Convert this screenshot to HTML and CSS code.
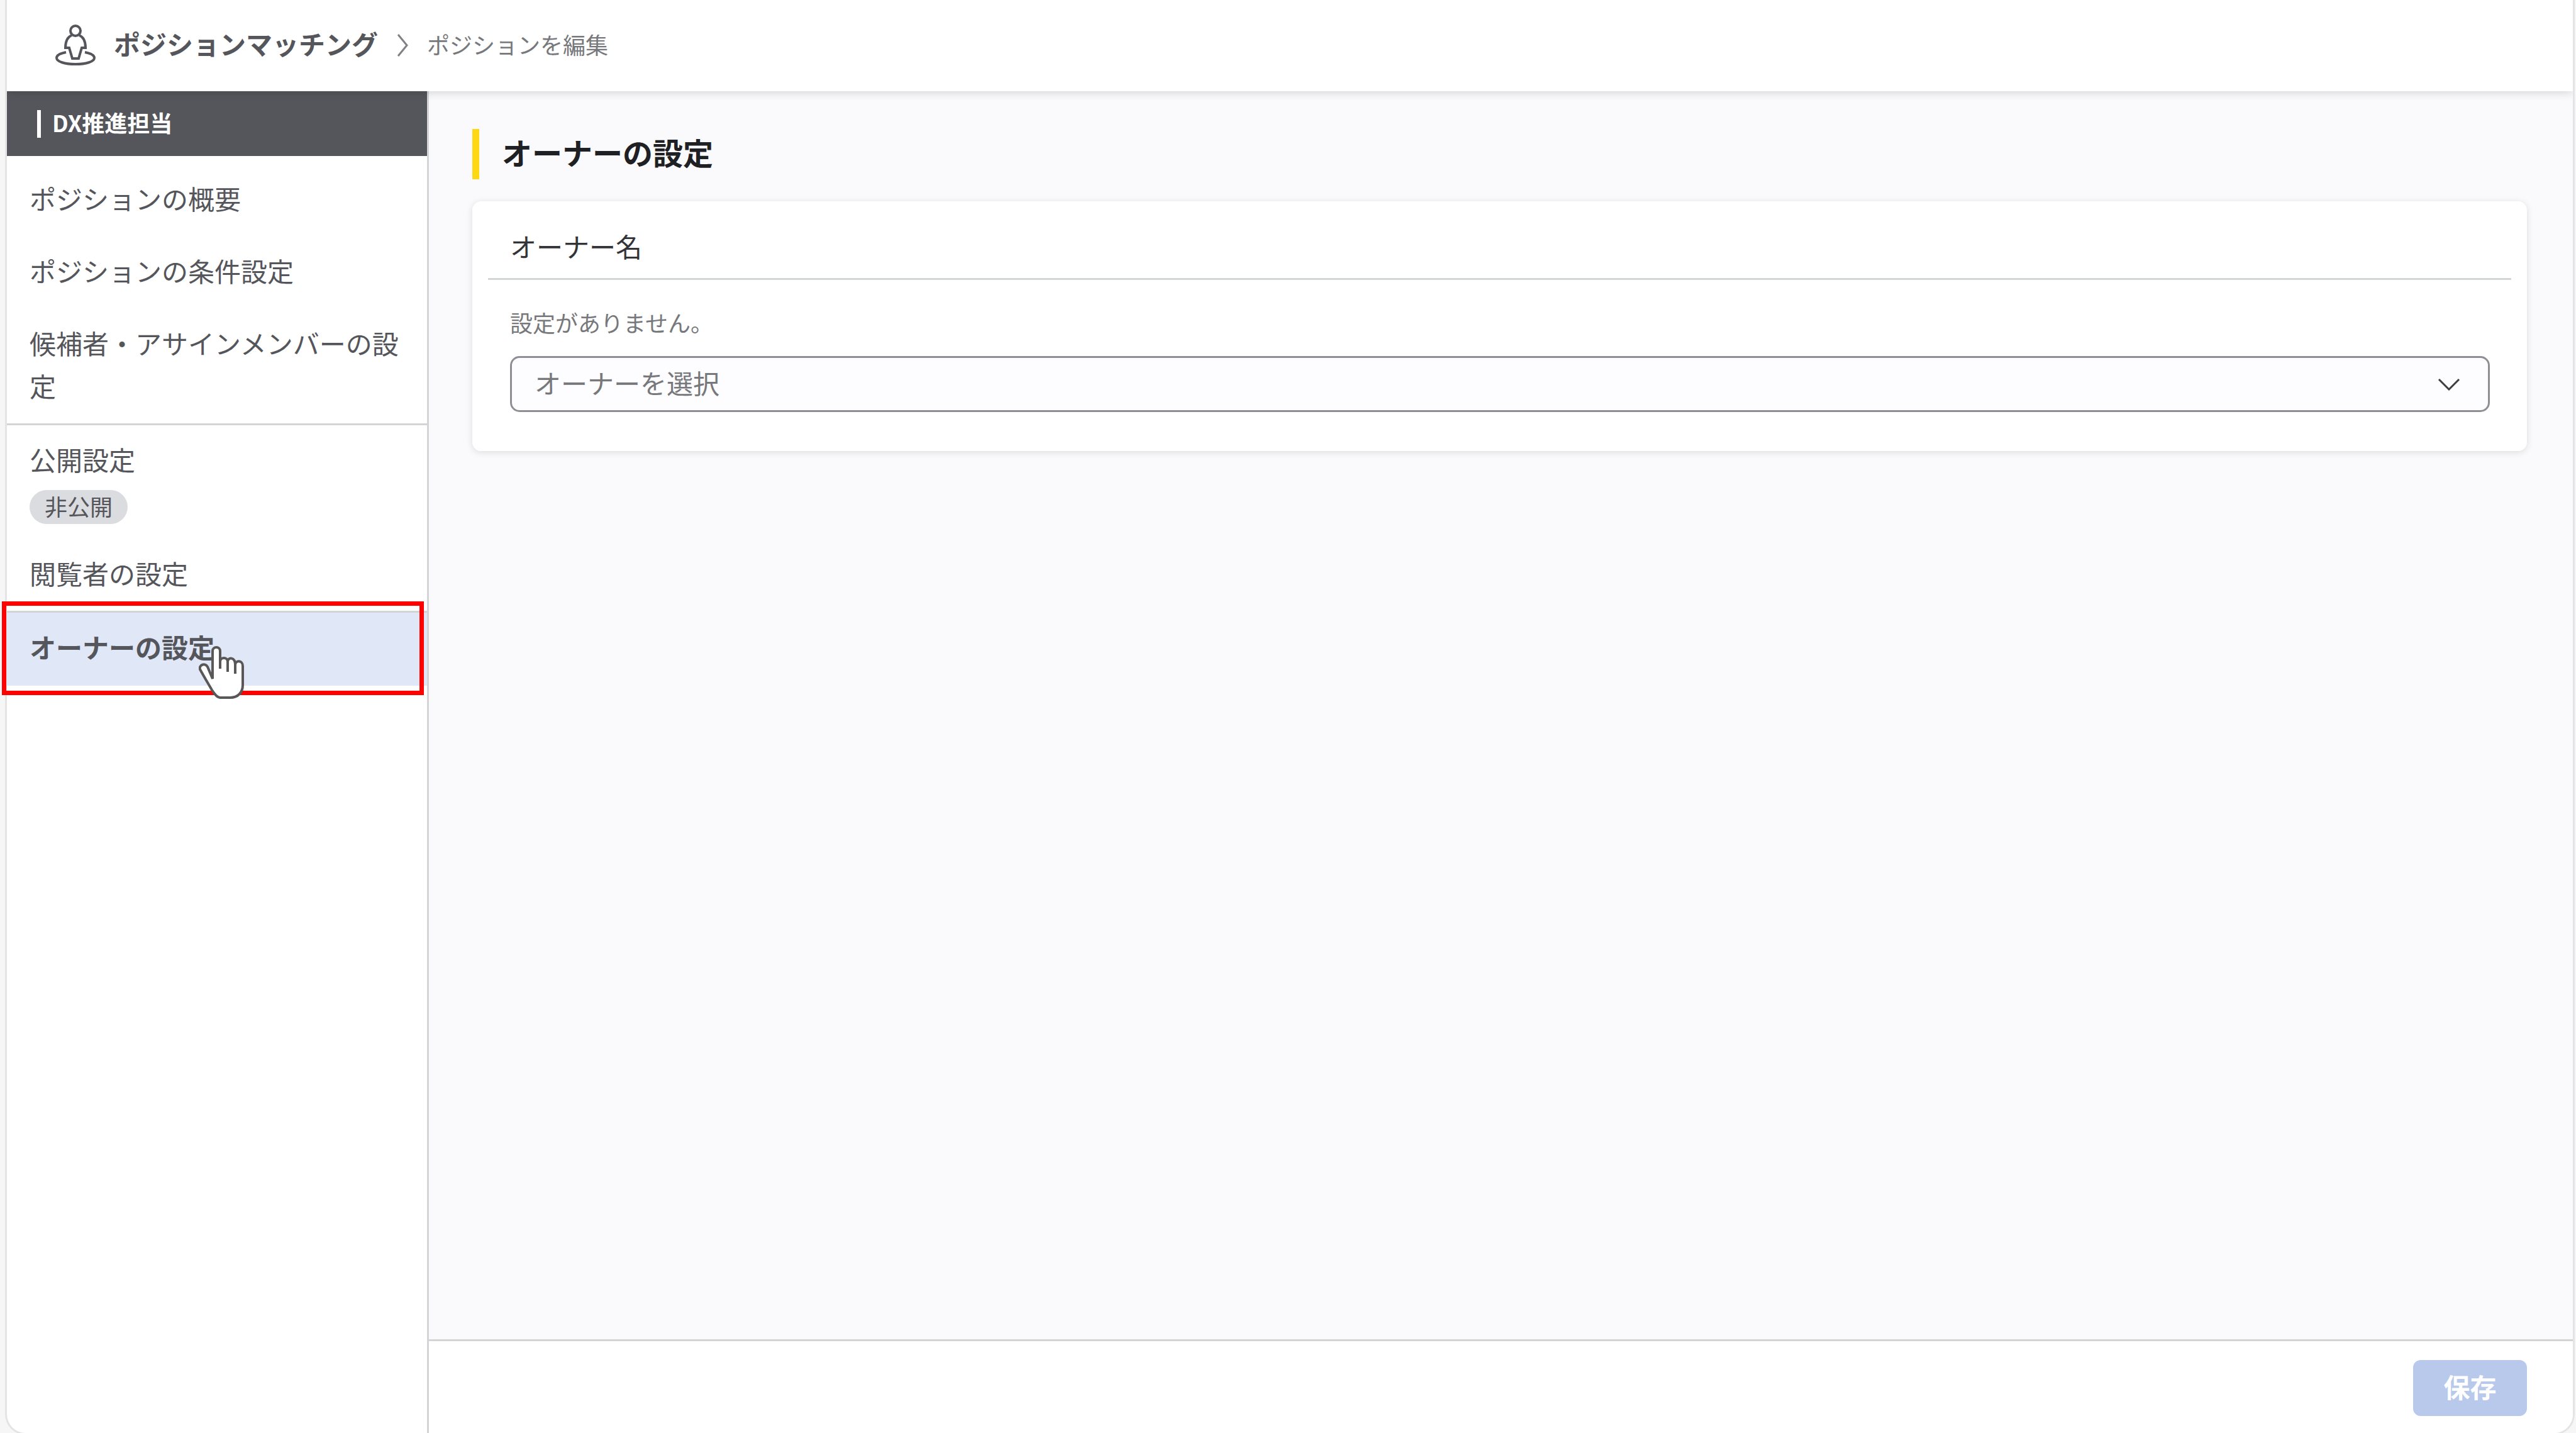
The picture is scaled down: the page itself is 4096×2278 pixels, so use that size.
FILE: index.html
```html
<!DOCTYPE html>
<html lang="ja">
<head>
<meta charset="utf-8">
<title>ポジションを編集</title>
<link rel="stylesheet" href="styles.css">
</head>
<body>
<div class="app">
  <header class="header">
    <svg class="header-icon" viewBox="0 0 64 66" aria-hidden="true">
      <ellipse cx="32" cy="10" rx="8" ry="8"/>
      <path d="M26 17C19 20 16 27 16 37H22L27 54H37L42 37H48C48 27 45 20 38 17"/>
      <path d="M17 44C7 46 2 49 2 53C2 59 15 63 32 63C49 63 62 59 62 53C62 49 57 46 47 44"/>
    </svg>
    <nav class="breadcrumb" aria-label="パンくず">
      <a class="breadcrumb-root" href="#">ポジションマッチング</a>
      <svg class="breadcrumb-sep" viewBox="0 0 18 36" aria-hidden="true"><path d="M2 1L16 18L2 35"/></svg>
      <span class="breadcrumb-current">ポジションを編集</span>
    </nav>
  </header>
  <div class="body">
    <aside class="sidebar">
      <h2 class="sidebar-title"><span class="sidebar-name">DX推進担当</span></h2>
      <nav class="menu">
        <div class="menu-group">
          <a class="menu-item" href="#">ポジションの概要</a>
          <a class="menu-item" href="#">ポジションの条件設定</a>
          <a class="menu-item" href="#">候補者・アサインメンバーの設定</a>
        </div>
        <div class="menu-group">
          <a class="menu-item" href="#">公開設定<span class="badge">非公開</span></a>
          <a class="menu-item" href="#">閲覧者の設定</a>
        </div>
        <div class="menu-group">
          <a class="menu-item active" href="#" aria-current="page">オーナーの設定
            <span class="highlight"></span>
            <svg class="pointer" viewBox="0 0 72 84" aria-hidden="true">
              <path d="M22 52V8C22 0 34 0 34 8V25C34 17 46 17 46 25C46 17 58 17 58 30C58 22 70 22 70 32V62C70 74 62 82 50 82H34C29 82 25 76 21 70C14 58 8 48 2 37C0 30 10 26 14 33Z"/>
              <path d="M34 22V36M46 24V41M58 28V44"/>
            </svg>
          </a>
        </div>
      </nav>
    </aside>
    <div class="content">
      <main class="main">
        <h1 class="page-title">オーナーの設定</h1>
        <section class="card">
          <h2 class="card-title"><label for="owner">オーナー名</label></h2>
          <div class="card-body">
            <p class="note">設定がありません。</p>
            <div class="select-wrap">
              <select class="select" id="owner"><option>オーナーを選択</option></select>
              <svg class="select-arrow" viewBox="0 0 36 20" aria-hidden="true"><path d="M2 2L18 18L34 2"/></svg>
            </div>
          </div>
        </section>
      </main>
      <footer class="footer">
        <button class="save" type="button" disabled>保存</button>
      </footer>
    </div>
  </div>
</div>
</body>
</html>
```
FILE: styles.css
```css
* {
  box-sizing: border-box;
}

body {
  margin: 0;
  background: #f6f6f6;
  color: #55565b;
  font-family: "Noto Sans CJK JP", "Noto Sans", sans-serif;
  font-size: 42px;
  line-height: 68px;
}

h1, h2, p {
  margin: 0;
}

a {
  color: inherit;
  text-decoration: none;
}

svg {
  fill: none;
  stroke: #55565b;
  stroke-width: 4;
}

.app {
  display: flex;
  flex-direction: column;
  min-height: 100vh;
  margin: 0 5px 0 11px;
  background: #fff;
  border-radius: 0 0 30px 30px;
  box-shadow: 0 0 0 3px #e4e4e4;
}

/* Header */
.header {
  position: relative;
  z-index: 1;
  display: flex;
  align-items: center;
  gap: 29px;
  height: 145px;
  padding: 0 77px 2px;
  background: #fff;
  box-shadow: 0 2px 14px rgba(0, 0, 0, 0.16);
  clip-path: inset(0 0 -20px 0);
}

.header-icon {
  width: 64px;
  height: 66px;
}

.breadcrumb {
  display: flex;
  align-items: center;
  gap: 30px;
}

.breadcrumb-root {
  padding-bottom: 6px;
  font-weight: 700;
}

.breadcrumb-sep {
  width: 18px;
  height: 36px;
  stroke: #808185;
  stroke-width: 3;
}

.breadcrumb-current {
  padding-bottom: 4px;
  color: #77787c;
  font-size: 36px;
}

/* Sidebar */
.body {
  display: flex;
  flex: 1;
}

.sidebar {
  flex: none;
  width: 671px;
  border-right: 3px solid #d3d4d6;
}

.sidebar-title {
  display: flex;
  align-items: center;
  gap: 18px;
  height: 103px;
  padding: 0 48px;
  background: #55565b;
  color: #fff;
  font-size: 36px;
  font-weight: 700;
}

.sidebar-title::before {
  content: "";
  width: 6px;
  height: 44px;
  background: #fff;
}

.sidebar-name {
  padding-bottom: 6px;
}

.menu {
  padding-top: 13px;
}

.menu-group {
  display: flex;
  flex-direction: column;
  gap: 1px;
}

.menu-group + .menu-group {
  border-top: 3px solid #d3d4d6;
}

.menu-item {
  position: relative;
  padding: 20px 36px 26px;
}

.badge {
  display: block;
  width: fit-content;
  margin: 15px 0 -3px;
  padding: 0 24px 4px;
  border-radius: 27px;
  background: #dadce0;
  font-size: 36px;
  line-height: 50px;
}

.menu-item.active {
  padding-bottom: 28px;
  background: #e0e7f7;
  font-weight: 700;
}

.highlight {
  position: absolute;
  inset: -18px 5px -15px -8px;
  border: 7px solid #f00;
}

.pointer {
  position: absolute;
  top: 53px;
  left: 305px;
  width: 72px;
  height: 84px;
  fill: #fff;
  stroke: #595757;
}

/* Content */
.content {
  display: flex;
  flex: 1;
  flex-direction: column;
  min-width: 0;
}

.main {
  flex: 1;
  padding: 60px 73px 60px 69px;
  background: #fafafc;
}

.page-title {
  padding: 2px 36px 10px;
  border-left: 11px solid #ffd814;
  color: #1f2024;
  font-size: 48px;
  font-weight: 700;
}

.card {
  margin-top: 35px;
  padding: 37px 25px 62px;
  border-radius: 14px;
  background: #fff;
  box-shadow: 0 2px 12px rgba(0, 0, 0, 0.12);
}

.card-title {
  padding: 0 35px 17px;
  border-bottom: 3px solid #d3d6d6;
  color: #333438;
  font-size: 42px;
  font-weight: 400;
}

.card-body {
  padding: 33px 34px 0 35px;
}

.note {
  color: #77787c;
  font-size: 36px;
}

.select-wrap {
  position: relative;
  margin-top: 20px;
}

.select {
  display: block;
  width: 100%;
  height: 89px;
  padding: 0 120px 6px 36px;
  border: 3px solid #8e8f95;
  border-radius: 15px;
  appearance: none;
  background: #fdfdff;
  color: #77787c;
  font: inherit;
}

.select-arrow {
  position: absolute;
  top: 35px;
  right: 47px;
  width: 36px;
  height: 20px;
  stroke: #3c3d41;
  stroke-width: 3;
  pointer-events: none;
}

.footer {
  display: flex;
  justify-content: flex-end;
  padding: 30px 73px 27px;
  border-top: 3px solid #d3d4d6;
  border-radius: 0 0 30px 0;
  background: #fff;
}

.save {
  width: 181px;
  height: 89px;
  padding: 0 0 5px;
  border: 0;
  border-radius: 12px;
  background: #b9c9ec;
  color: #fff;
  font: inherit;
  font-weight: 700;
}
```
